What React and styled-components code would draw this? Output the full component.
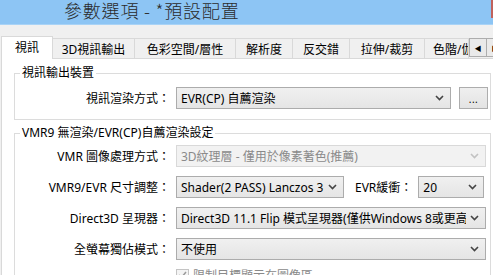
import React from 'react';
import styled, { createGlobalStyle } from 'styled-components';

const GlobalStyle = createGlobalStyle`
  html, body {
    margin: 0;
    padding: 0;
    background: #f0f0f0;
  }
  body {
    font-family: "Noto Sans", "Noto Sans CJK TC", sans-serif;
    font-size: 12px;
    color: #000;
  }
`;

const Window = styled.div`
  width: 493px;
  height: 275px;
  overflow: hidden;
  display: flex;
  flex-direction: column;
  background: #f0f0f0;
`;

const TitleBar = styled.div`
  flex: none;
  height: 24px;
  display: flex;
  justify-content: space-between;
  background: #8dc5f4;
  border-bottom: 1px solid #a9d3f6;
`;

const Title = styled.div`
  padding-left: 64px;
  font-family: "Noto Sans CJK TC", sans-serif;
  font-weight: 300;
  font-size: 18px;
  line-height: 21px;
  color: #2b2b2b;
  letter-spacing: 0.8px;
`;

const CloseEdge = styled.div`
  width: 2px;
  height: 18px;
  background: #c0625c;
`;

const TabArea = styled.div`
  flex: 1;
  min-height: 0;
  display: flex;
  flex-direction: column;
  padding: 11px 0 0 1px;
`;

const TabStrip = styled.div`
  flex: none;
  display: flex;
  align-items: flex-end;
`;

const Tab = styled.div`
  flex: none;
  box-sizing: border-box;
  width: ${(p) => p.$w}px;
  height: ${(p) => (p.$active ? 23 : 20)}px;
  margin-left: ${(p) => (p.$first ? 0 : -1)}px;
  margin-bottom: ${(p) => (p.$active ? -1 : 0)}px;
  position: relative;
  z-index: ${(p) => (p.$active ? 1 : 0)};
  border: 1px solid #d9d9d9;
  border-bottom: none;
  background: ${(p) => (p.$active ? '#fff' : '#f0f0f0')};
  display: flex;
  align-items: center;
  justify-content: ${(p) => (p.$start ? 'flex-start' : 'center')};
  padding-left: ${(p) => (p.$start ? 8 : 0)}px;
  padding-bottom: ${(p) => (p.$active ? 2 : 0)}px;
  overflow: hidden;
  white-space: nowrap;
`;

const ScrollButton = styled.div`
  flex: none;
  box-sizing: border-box;
  width: 18px;
  height: 19px;
  margin: 0 0 1px ${(p) => (p.$first ? 0 : -1)}px;
  border: 1px solid #adadad;
  background: #eaeaea;
  display: flex;
  align-items: center;
  justify-content: center;
  font-size: 7px;
  color: #000;
`;

const Panel = styled.div`
  flex: 1;
  background: #fff;
  border-top: 1px solid #d9d9d9;
  border-left: 1px solid #d9d9d9;
  padding: 6px 2px 0 12px;
  display: flex;
  flex-direction: column;
  gap: 5px;
`;

const Group = styled.fieldset`
  margin: 0;
  min-width: 0;
  border: 1px solid #dcdcdc;
  padding: ${(p) => p.$pad};
  display: flex;
  flex-direction: column;
  gap: 9px;
`;

const Legend = styled.legend`
  margin-left: 5px;
  padding: 0 2px;
  line-height: 16px;
`;

const Row = styled.div`
  display: flex;
  align-items: center;
  height: 22px;
`;

const Label = styled.div`
  flex: none;
  width: 155px;
  margin-right: 6px;
  text-align: right;
  white-space: nowrap;
`;

const InlineLabel = styled.div`
  flex: none;
  margin: 0 6px 0 11px;
  white-space: nowrap;
`;

const Select = styled.div`
  flex: ${(p) => (p.$w ? 'none' : '1')};
  width: ${(p) => (p.$w ? `${p.$w}px` : 'auto')};
  min-width: 0;
  box-sizing: border-box;
  height: 22px;
  border: 1px solid ${(p) => (p.$disabled ? '#d9d9d9' : '#acacac')};
  background: ${(p) =>
    p.$disabled ? '#f2f2f2' : 'linear-gradient(#f0f0f0, #e5e5e5)'};
  color: ${(p) => (p.$disabled ? '#8a8a8a' : '#000')};
  display: flex;
  align-items: center;
  gap: 4px;
  padding: 0 6px 0 4px;
`;

const SelectText = styled.span`
  flex: 1;
  min-width: 0;
  overflow: hidden;
  white-space: nowrap;
`;

const DotsButton = styled.div`
  flex: none;
  box-sizing: border-box;
  width: 29px;
  height: 22px;
  margin: 0 2px 0 8px;
  border: 1px solid #adadad;
  background: linear-gradient(#efefef, #e3e3e3);
  display: flex;
  align-items: flex-end;
  justify-content: center;
  padding-bottom: 4px;
  font-size: 10px;
  line-height: 10px;
  letter-spacing: 0.5px;
`;

const CheckRow = styled.div`
  display: flex;
  align-items: center;
  padding-left: 161px;
  height: 16px;
  margin-top: -2px;
  color: #8a8a8a;
`;

const CheckBox = styled.div`
  flex: none;
  box-sizing: border-box;
  width: 13px;
  height: 13px;
  margin-right: 4px;
  border: 1px solid #c4c4c4;
  background: #f4f4f4;
  display: flex;
  align-items: center;
  justify-content: center;
`;

function Chevron({ disabled }) {
  return (
    <svg width="9" height="6" viewBox="0 0 9 6">
      <path
        d="M1 1 L4.5 4.5 L8 1"
        fill="none"
        stroke={disabled ? '#c2c2c2' : '#444'}
        strokeWidth="1.6"
      />
    </svg>
  );
}

function Combo({ text, w, disabled }) {
  return (
    <Select $w={w} $disabled={disabled}>
      <SelectText>{text}</SelectText>
      <Chevron disabled={disabled} />
    </Select>
  );
}

const tabs = [
  { name: '視訊', w: 52 },
  { name: '3D視訊輸出', w: 83 },
  { name: '色彩空間/層性', w: 102 },
  { name: '解析度', w: 58 },
  { name: '反交錯', w: 58 },
  { name: '拉伸/裁剪', w: 76 },
  { name: '色階/伽瑪', w: 45, start: true },
];

export default function App() {
  return (
    <>
      <GlobalStyle />
      <Window>
        <TitleBar>
          <Title>參數選項 - *預設配置</Title>
          <CloseEdge />
        </TitleBar>
        <TabArea>
          <TabStrip>
            {tabs.map((t, i) => (
              <Tab
                key={t.name}
                $w={t.w}
                $first={i === 0}
                $active={i === 0}
                $start={t.start}
              >
                {t.name}
              </Tab>
            ))}
            <ScrollButton $first>◀</ScrollButton>
            <ScrollButton>▶</ScrollButton>
          </TabStrip>
          <Panel>
            <Group $pad="6px 0 10px 0">
              <Legend>視訊輸出裝置</Legend>
              <Row>
                <Label>視訊渲染方式：</Label>
                <Combo text="EVR(CP) 自薦渲染" />
                <DotsButton>...</DotsButton>
              </Row>
            </Group>
            <Group $pad="4px 4px 8px 0">
              <Legend>VMR9 無渲染/EVR(CP)自薦渲染設定</Legend>
              <Row>
                <Label>VMR 圖像處理方式：</Label>
                <Combo text="3D紋理層 - 僅用於像素著色(推薦)" disabled />
              </Row>
              <Row>
                <Label>VMR9/EVR 尺寸調整：</Label>
                <Combo text="Shader(2 PASS) Lanczos 3" w={168} />
                <InlineLabel>EVR緩衝：</InlineLabel>
                <Combo text="20" w={66} />
              </Row>
              <Row>
                <Label>Direct3D 呈現器：</Label>
                <Combo text="Direct3D 11.1 Flip 模式呈現器(僅供Windows 8或更高版本)" />
              </Row>
              <Row>
                <Label>全螢幕獨佔模式：</Label>
                <Combo text="不使用" />
              </Row>
              <CheckRow>
                <CheckBox>
                  <svg width="9" height="8" viewBox="0 0 9 8">
                    <path d="M1 4 L3.5 6.5 L8 1" fill="none" stroke="#9a9a9a" strokeWidth="1.5" />
                  </svg>
                </CheckBox>
                限制目標顯示在圖像區
              </CheckRow>
            </Group>
          </Panel>
        </TabArea>
      </Window>
    </>
  );
}
